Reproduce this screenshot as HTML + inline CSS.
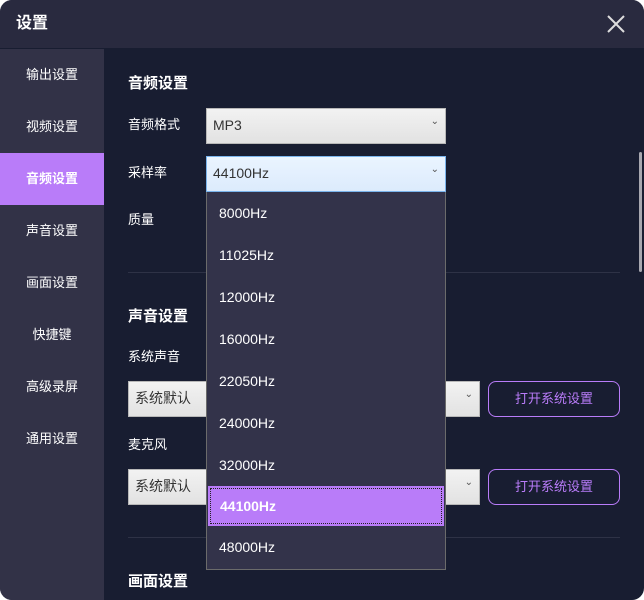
<!DOCTYPE html>
<html><head><meta charset="utf-8"><style>
*{margin:0;padding:0;box-sizing:border-box}
body{width:644px;height:600px;background:#fff;font-family:"Liberation Sans","Noto Sans CJK SC",sans-serif;overflow:hidden;position:relative}
.win{position:absolute;left:0;top:0;width:644px;height:600px;border-radius:12px;overflow:hidden;background:#181d31}
.title{position:absolute;left:0;top:0;width:644px;height:48px;background:#292a3f;color:#fff;font-size:16px;font-weight:bold;line-height:48px;padding-left:16px}
.side{position:absolute;left:0;top:49px;width:104px;height:551px;background:#323247}
.side div{height:52px;line-height:52px;text-align:center;color:#fff;font-size:13px}
.side .on{background:#b97cf9;font-weight:bold}
.a{position:absolute;color:#fff;font-size:13px;white-space:nowrap}
.h{font-size:15px;font-weight:bold}
.sel{position:absolute;background:linear-gradient(#f2f2f2,#e2e2e2);border:1px solid #b8b8b8;color:#333;font-size:14px;line-height:33px;padding-left:6px}
.sel:after{content:"\2304";position:absolute;right:6px;top:-4px;font-size:10px;color:#555}
.btn{position:absolute;border:1px solid #b97cf9;border-radius:8px;color:#b97cf9;font-size:13px;text-align:center;line-height:34px;width:132px;height:36px}
.hr{position:absolute;left:128px;width:492px;height:1px;background:#2e3246}
.dd{position:absolute;left:206px;top:192px;width:240px;height:378px;background:#33334a;border:1px solid #6b6b6b;border-top:none}
.dd div{height:42px;line-height:42px;padding-left:12px;color:#fff;font-size:14px}
.dd .hl{background:#b97cf9;font-weight:bold;outline:1px dotted #222;outline-offset:-3px;height:40px;line-height:40px;margin:0 1px}
</style></head><body><div class="win">
<div class="title">设置</div>
<svg style="position:absolute;left:607px;top:15px" width="18" height="18"><path d="M1 1L17 17M17 1L1 17" stroke="#ddd" stroke-width="2"/></svg>
<div class="side"><div>输出设置</div><div>视频设置</div><div class="on">音频设置</div><div>声音设置</div><div>画面设置</div><div>快捷键</div><div>高级录屏</div><div>通用设置</div></div>
<div style="position:absolute;left:639px;top:152px;width:3px;height:120px;background:#a8a8b0;border-radius:2px"></div>
<div class="a h" style="left:128px;top:72px">音频设置</div>
<div class="a" style="left:128px;top:114px">音频格式</div>
<div class="a" style="left:128px;top:162px">采样率</div>
<div class="a" style="left:128px;top:209px">质量</div>
<div class="sel" style="left:206px;top:108px;width:240px;height:36px">MP3</div>
<div class="sel" style="left:206px;top:156px;width:240px;height:36px;background:linear-gradient(#eaf4ff,#dcebfc);border-color:#7ab4ec">44100Hz</div>
<div class="hr" style="top:272px"></div>
<div class="a h" style="left:128px;top:305px">声音设置</div>
<div class="a" style="left:128px;top:346px">系统声音</div>
<div class="sel" style="left:128px;top:381px;width:352px;height:36px">系统默认</div>
<div class="btn" style="left:488px;top:381px">打开系统设置</div>
<div class="a" style="left:128px;top:434px">麦克风</div>
<div class="sel" style="left:128px;top:469px;width:352px;height:36px">系统默认</div>
<div class="btn" style="left:488px;top:469px">打开系统设置</div>
<div class="hr" style="top:537px"></div>
<div class="a h" style="left:128px;top:570px">画面设置</div>
<div class="dd"><div>8000Hz</div><div>11025Hz</div><div>12000Hz</div><div>16000Hz</div><div>22050Hz</div><div>24000Hz</div><div>32000Hz</div><div class="hl">44100Hz</div><div>48000Hz</div></div>
</div></body></html>
